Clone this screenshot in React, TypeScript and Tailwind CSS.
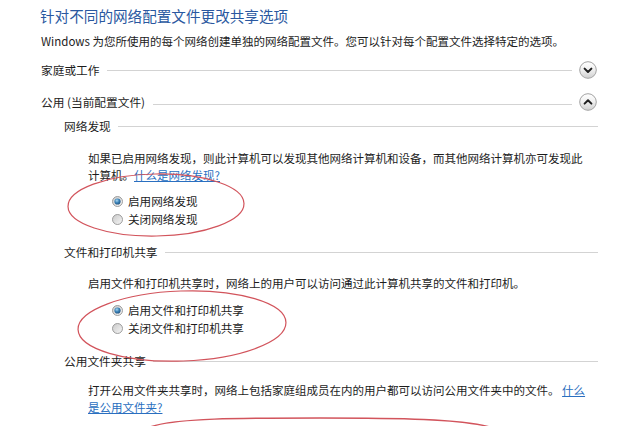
import React from "react";

const font = {
  fontFamily: '"Noto Sans CJK SC", "Noto Sans", sans-serif',
};

function Chevron({ up }: { up?: boolean }) {
  return (
    <svg width="18" height="18" viewBox="0 0 18 18" className="shrink-0">
      <defs>
        <linearGradient id={up ? "gu" : "gd"} x1="0" y1="0" x2="0" y2="1">
          <stop offset="0" stopColor="#ffffff" />
          <stop offset="0.5" stopColor="#efefef" />
          <stop offset="1" stopColor="#cfcfcf" />
        </linearGradient>
      </defs>
      <circle cx="9" cy="9" r="8.3" fill={`url(#${up ? "gu" : "gd"})`} stroke="#a3a3a3" strokeWidth="1" />
      {up ? (
        <path d="M5.6 10.6 L9 7.2 L12.4 10.6" fill="none" stroke="#1f1f1f" strokeWidth="2" strokeLinecap="round" strokeLinejoin="round" />
      ) : (
        <path d="M5.6 7.6 L9 11 L12.4 7.6" fill="none" stroke="#1f1f1f" strokeWidth="2" strokeLinecap="round" strokeLinejoin="round" />
      )}
    </svg>
  );
}

function Radio({ checked, id }: { checked?: boolean; id: string }) {
  return (
    <svg width="11" height="11" viewBox="0 0 11 11" className="shrink-0">
      <defs>
        <linearGradient id={`rb${id}`} x1="0" y1="0" x2="1" y2="1">
          <stop offset="0" stopColor="#c8c8c8" />
          <stop offset="1" stopColor="#f7f7f7" />
        </linearGradient>
        <radialGradient id={`rd${id}`} cx="0.4" cy="0.35" r="0.7">
          <stop offset="0" stopColor="#a9d6f0" />
          <stop offset="0.5" stopColor="#3c83b8" />
          <stop offset="1" stopColor="#1d4f7c" />
        </radialGradient>
      </defs>
      <circle cx="5.5" cy="5.5" r="5" fill={`url(#rb${id})`} stroke="#949494" strokeWidth="0.9" />
      {checked && <circle cx="5.5" cy="5.5" r="3.1" fill={`url(#rd${id})`} />}
    </svg>
  );
}

function SubHeading({ text, mt }: { text: string; mt: string }) {
  return (
    <div className={`flex items-center h-[18px] pl-[64px] pr-[42px] ${mt}`}>
      <span className="text-[11.7px] text-[#1c1c1c] whitespace-nowrap leading-[18px]">{text}</span>
      <div className="flex-1 h-px bg-[#d3d3d3] ml-[7px]" />
    </div>
  );
}

function RadioRow({ checked, text, id }: { checked?: boolean; text: string; id: string }) {
  return (
    <div className="flex items-center h-[18px] pl-[112px] gap-[5px]">
      <Radio checked={checked} id={id} />
      <span className="text-[11.6px] text-[#1c1c1c] leading-[18px] whitespace-nowrap">{text}</span>
    </div>
  );
}

export default function App() {
  return (
    <div className="relative w-[640px] h-[426px] bg-white overflow-hidden" style={font}>
      <div className="flex flex-col">
        <div className="pl-[40px] pt-[6px] text-[14.6px] leading-[20px] text-[#2a58a0] whitespace-nowrap">
          针对不同的网络配置文件更改共享选项
        </div>
        <div className="pl-[41px] mt-[7px] text-[11.5px] leading-[16px] text-[#1c1c1c] whitespace-nowrap">
          Windows 为您所使用的每个网络创建单独的网络配置文件。您可以针对每个配置文件选择特定的选项。
        </div>

        <div className="flex items-center h-[18px] mt-[12px] pl-[41px] pr-[43px]">
          <span className="text-[11.7px] text-[#1c1c1c] whitespace-nowrap">家庭或工作</span>
          <div className="flex-1 h-px bg-[#d3d3d3] ml-[8px] mr-[7px]" />
          <Chevron />
        </div>

        <div className="flex items-center h-[18px] mt-[14px] pl-[41px] pr-[43px]">
          <span className="text-[11.7px] text-[#1c1c1c] whitespace-nowrap">公用 (当前配置文件)</span>
          <div className="flex-1 h-px bg-[#d3d3d3] ml-[8px] mr-[7px] mt-[4px]" />
          <Chevron up />
        </div>

        <SubHeading text="网络发现" mt="mt-[6px]" />
        <div className="pl-[88px] mt-[15px] text-[11.5px] leading-[17px] text-[#1c1c1c] whitespace-nowrap">
          如果已启用网络发现，则此计算机可以发现其他网络计算机和设备，而其他网络计算机亦可发现此
          <br />
          计算机。<span className="text-[#2a6fc0] underline">什么是网络发现?</span>
        </div>
        <div className="mt-[8px] flex flex-col">
          <RadioRow checked text="启用网络发现" id="a" />
          <RadioRow text="关闭网络发现" id="b" />
        </div>

        <SubHeading text="文件和打印机共享" mt="mt-[15px]" />
        <div className="pl-[88px] mt-[14px] text-[11.5px] leading-[17px] text-[#1c1c1c] whitespace-nowrap">
          启用文件和打印机共享时，网络上的用户可以访问通过此计算机共享的文件和打印机。
        </div>
        <div className="mt-[9px] flex flex-col">
          <RadioRow checked text="启用文件和打印机共享" id="c" />
          <RadioRow text="关闭文件和打印机共享" id="d" />
        </div>

        <SubHeading text="公用文件夹共享" mt="mt-[15px]" />
        <div className="pl-[88px] mt-[12px] text-[11.5px] leading-[17px] text-[#1c1c1c] whitespace-nowrap">
          打开公用文件夹共享时，网络上包括家庭组成员在内的用户都可以访问公用文件夹中的文件。 <span className="text-[#2a6fc0] underline">什么</span>
          <br />
          <span className="text-[#2a6fc0] underline">是公用文件夹?</span>
        </div>
      </div>

      <svg className="absolute inset-0 pointer-events-none" width="640" height="426" viewBox="0 0 640 426">
        <ellipse cx="156" cy="205" rx="88" ry="31" fill="none" stroke="#d2545c" strokeWidth="1.2" transform="rotate(-1 156 205)" />
        <ellipse cx="182" cy="326" rx="104" ry="35" fill="none" stroke="#d2545c" strokeWidth="1.2" transform="rotate(-2 182 326)" />
        <path d="M150 427 C 175 418 240 418 320 418 C 400 418 460 419 490 427" fill="none" stroke="#d2545c" strokeWidth="1.4" />
      </svg>
    </div>
  );
}
